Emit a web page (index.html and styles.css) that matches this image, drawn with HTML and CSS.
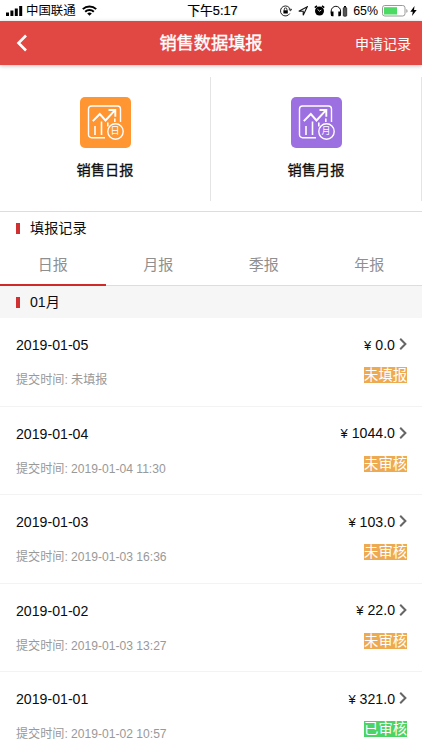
FILE: index.html
```html
<!DOCTYPE html>
<html lang="zh-CN">
<head>
<meta charset="utf-8">
<title>销售数据填报</title>
<link rel="stylesheet" href="styles.css">
</head>
<body>
<svg class="defs" width="0" height="0">
  <symbol id="chart" viewBox="0 0 51 51">
    <g fill="none" stroke="currentColor" stroke-width="1.4">
      <path d="M25 40.700H11.500a3 3 0 0 1-3-3V12a3 3 0 0 1 3-3h26a3 3 0 0 1 3 3V25"/>
      <path d="M12.800 24.200l7-7.200 5.700 6.500L35 13.200M28.500 13h6.800v6.800" stroke-width="1.900"/>
      <path d="M15 29v9M21.500 24.500V38M27.800 25.500v4M34.800 21.500v3.500" stroke-width="1.600"/>
      <circle cx="35.500" cy="34.500" r="7.700"/>
    </g>
  </symbol>
  <symbol id="chevron" viewBox="0 0 8 12"><path d="M1.200 .8l5.200 5.200-5.200 5.200" fill="none" stroke="#666" stroke-width="2"/></symbol>
</svg>
<div class="status">
  <div class="status-left">
    <svg width="17" height="10" viewBox="0 0 17 10"><path d="M0 6.500h3v3.500H0zM4.400 4.500h3V10h-3zM8.800 2.500h3V10h-3zM13.200 0h3v10h-3z"/></svg>
    <span class="carrier">中国联通</span>
    <svg width="15" height="11" viewBox="0 0 15 11"><g fill="none" stroke="#000" stroke-width="2"><path d="M.8 4.100a9.600 9.600 0 0 1 13.400 0M3.200 6.800a6.200 6.200 0 0 1 8.600 0"/></g><path d="M7.500 10.800L5.200 8.500a3.300 3.300 0 0 1 4.600 0z"/></svg>
  </div>
  <div class="time">下午5:17</div>
  <div class="status-right">
    <svg width="12" height="12" viewBox="0 0 12 12"><path d="M9.800 8.500A5 5 0 1 1 10.400 5M8.700 4.200l1.900 1.600 1.100-2" fill="none" stroke="#222" stroke-width="1"/><path d="M3.400 5.300h4.400v3.200H3.400z"/><path d="M4.300 5.500V4.200a1.300 1.300 0 0 1 2.600 0v1.300" fill="none" stroke="#000" stroke-width=".8"/></svg>
    <svg class="arrow" width="10" height="10" viewBox="0 0 10 10"><path d="M.8 5.300L9.200.8 5.200 9.300V5.300z" fill="none" stroke="#111" stroke-width="1.100"/></svg>
    <svg class="alarm" width="11" height="11" viewBox="0 0 11 11"><circle cx="5.500" cy="6" r="4.500"/><path d="M.8 2.600L3 .8M8 .8l2.200 1.800" stroke="#000" stroke-width="1.500"/><path d="M3.500 4.300L5.500 6.200 7.300 5" fill="none" stroke="#fff" stroke-width=".8"/></svg>
    <svg class="phones" width="18" height="12" viewBox="0 0 18 12"><path d="M1.200 8.500V6a4.700 4.700 0 0 1 9.400 0v2.500" fill="none" stroke="#111"/><path d="M.8 6.500h2.700v4.700H2.300A1.500 1.500 0 0 1 .8 9.700zM8.300 6.500H11v3.200a1.500 1.500 0 0 1-1.500 1.500H8.300zM14 1h2v1.500h-2z"/><rect x="13.300" y="2.500" width="3.400" height="8.700" rx=".8" fill="#555" stroke="#222" stroke-width=".8"/></svg>
    <span class="percent">65%</span>
    <svg class="battery" width="26" height="12" viewBox="0 0 26 12"><rect x=".5" y=".5" width="22.500" height="10.500" rx="2.300" fill="#fff" stroke="#999"/><path d="M2 2.200h13v7.300H2z" fill="#4cd964"/><path d="M24.300 4v3.800q1.300-.4 1.300-1.900t-1.300-1.900" fill="#999"/></svg>
    <svg class="bolt" width="7" height="10" viewBox="0 0 7 10"><path d="M4.500 0L.3 5.700h2.500L2 10l4.700-5.900H4z"/></svg>
  </div>
</div>
<header class="nav">
  <svg class="back" width="12" height="18" viewBox="0 0 12 18"><path d="M10 1.500L2.500 9l7.500 7.500" fill="none" stroke="#fff" stroke-width="2.600"/></svg>
  <h1>销售数据填报</h1>
  <span class="apply">申请记录</span>
</header>
<section class="entries">
  <div class="entry"><div class="tile orange"><svg width="51" height="51"><use href="#chart"/></svg><span>日</span></div><div class="label">销售日报</div></div>
  <div class="entry"><div class="tile purple"><svg width="51" height="51"><use href="#chart"/></svg><span>月</span></div><div class="label">销售月报</div></div>
</section>
<div class="section-title"><span>填报记录</span></div>
<nav class="tabs"><span class="active">日报</span><span>月报</span><span>季报</span><span>年报</span></nav>
<div class="section-title month"><span>01月</span></div>
<main>
  <article class="row"><div class="line"><span>2019-01-05</span><span class="amount"><span><span class="yen">¥</span>0.0</span><svg width="8" height="12"><use href="#chevron"/></svg></span></div><div class="line sub"><span class="submitted">提交时间: 未填报</span><span class="tag">未填报</span></div></article>
  <article class="row"><div class="line"><span>2019-01-04</span><span class="amount"><span><span class="yen">¥</span>1044.0</span><svg width="8" height="12"><use href="#chevron"/></svg></span></div><div class="line sub"><span class="submitted">提交时间: 2019-01-04 11:30</span><span class="tag">未审核</span></div></article>
  <article class="row"><div class="line"><span>2019-01-03</span><span class="amount"><span><span class="yen">¥</span>103.0</span><svg width="8" height="12"><use href="#chevron"/></svg></span></div><div class="line sub"><span class="submitted">提交时间: 2019-01-03 16:36</span><span class="tag">未审核</span></div></article>
  <article class="row"><div class="line"><span>2019-01-02</span><span class="amount"><span><span class="yen">¥</span>22.0</span><svg width="8" height="12"><use href="#chevron"/></svg></span></div><div class="line sub"><span class="submitted">提交时间: 2019-01-03 13:27</span><span class="tag">未审核</span></div></article>
  <article class="row"><div class="line"><span>2019-01-01</span><span class="amount"><span><span class="yen">¥</span>321.0</span><svg width="8" height="12"><use href="#chevron"/></svg></span></div><div class="line sub"><span class="submitted">提交时间: 2019-01-02 10:57</span><span class="tag done">已审核</span></div></article>
</main>
</body>
</html>
```
FILE: styles.css
```css
* { box-sizing: border-box; }
body {
  margin: 0;
  width: 422px;
  height: 750px;
  overflow: hidden;
  background: #fff;
  color: #0c0c0c;
  font-family: "Liberation Sans", "Noto Sans CJK SC", sans-serif;
  font-size: 14.15px;
}
svg { display: block; flex: none; }
.defs { position: absolute; }
.status {
  display: grid;
  grid-template-columns: 1fr auto 1fr;
  align-items: center;
  height: 21px;
  padding: 0 5px 0 6px;
  color: #000;
  font-size: 12.4px;
  line-height: 20px;
}
.status-left, .status-right { display: flex; align-items: center; }
.carrier { margin: 0 6px 0 3px; }
.time { padding-left: 2px; font-size: 12.8px; -webkit-text-stroke: .2px #000; }
.status-right { justify-content: flex-end; }
.arrow { margin-left: 6px; }
.alarm { margin-left: 6px; }
.phones { margin-left: 5px; }
.percent { margin-left: 5px; }
.battery { margin-left: 4px; }
.bolt { margin-left: 2px; }
.nav {
  position: relative;
  display: grid;
  grid-template-columns: 1fr auto 1fr;
  align-items: center;
  height: 44px;
  padding: 0 11px 0 16px;
  background: #e14844;
  color: #fff;
  box-shadow: 0 1px 4px rgba(0, 0, 0, .25);
}
.nav h1 { margin: 0; padding-right: 5px; font-size: 17.2px; line-height: 44px; font-weight: 400; -webkit-text-stroke: .4px #fff; }
.apply { justify-self: end; padding-bottom: 1px; font-size: 14px; }
.entries {
  display: flex;
  height: 147px;
  padding-top: 12px;
  border-bottom: 1px solid #ddd;
}
.entry {
  display: flex;
  flex-direction: column;
  align-items: center;
  width: 211px;
  height: 124px;
  padding-top: 20px;
  border-right: 1px solid #e4e4e4;
}
.tile { position: relative; width: 51px; height: 51px; border-radius: 5px; color: #fff; }
.orange { background: #ff9632; }
.purple { background: #9d70e2; }
.tile span { position: absolute; left: 30px; top: 29px; width: 11px; font-size: 9px; line-height: 11px; text-align: center; }
.label { margin-top: 11px; font-size: 14.2px; line-height: 22px; -webkit-text-stroke: .3px #111; }
.section-title {
  display: flex;
  align-items: center;
  gap: 10px;
  height: 32px;
  padding-left: 16px;
}
.section-title::before { content: ""; width: 4px; height: 11px; background: #d0302f; }
.section-title span { padding-bottom: 3px; }
.tabs { display: flex; height: 42px; border-bottom: 1px solid #ddd; color: #8f8f8f; font-size: 15px; line-height: 42px; }
.tabs span { flex: 1; height: 42px; text-align: center; }
.tabs .active { border-bottom: 2px solid #cf2a2a; }
.month { background: #f6f6f6; }
.row { height: 88.5px; padding: 14px 15px 0 16px; border-bottom: 1px solid #f3f3f3; }
.line { display: flex; justify-content: space-between; align-items: center; height: 26px; line-height: 24px; }
.amount { display: flex; align-items: center; gap: 4px; }
.amount svg { margin-bottom: 2px; }
.yen { margin-right: 4px; font-size: 13px; }
.sub { height: 18px; margin-top: 8px; color: #999; font-size: 12.1px; }
.submitted { padding-top: 10px; }
.tag { height: 16px; background: #eeaa50; color: #fff; font-size: 14.3px; line-height: 16px; }
.done { background: #4bd365; }
```
